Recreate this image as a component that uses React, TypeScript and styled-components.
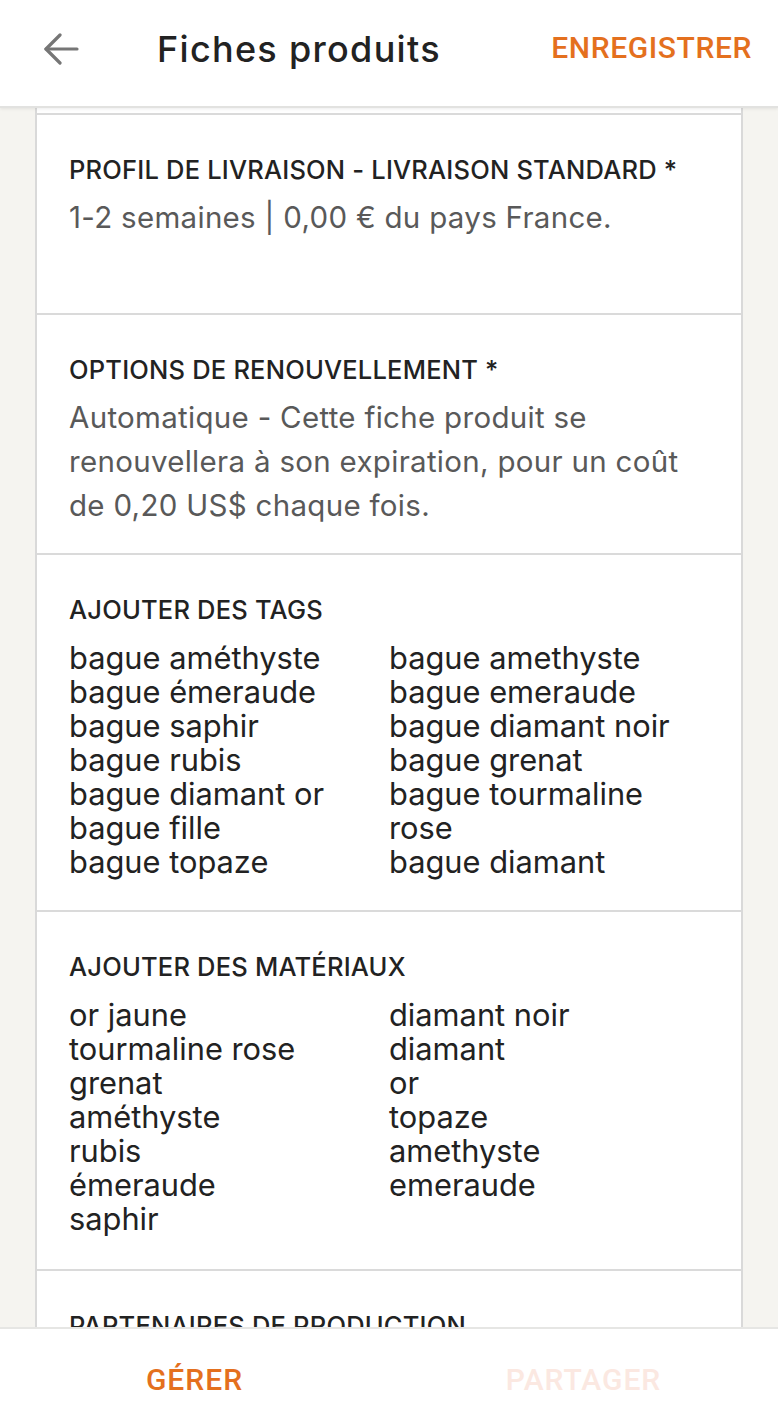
import React from "react";
import styled, { createGlobalStyle } from "styled-components";

const GlobalStyle = createGlobalStyle`
	html, body {
		margin: 0;
		padding: 0;
		background: #f5f4f0;
	}
	* {
		box-sizing: border-box;
	}
`;

const Screen = styled.div`
	width: 778px;
	height: 1411px;
	display: flex;
	flex-direction: column;
	background: #f5f4f0;
	overflow: hidden;
	font-family: Inter, "Noto Sans", sans-serif;
`;

const Header = styled.header`
	height: 108px;
	flex-shrink: 0;
	display: flex;
	align-items: center;
	padding: 0 26px 8px 42px;
	background: #fff;
	border-bottom: 2px solid #e2e2e0;
	box-shadow: 0 1px 3px rgba(0, 0, 0, 0.08);
	position: relative;
	z-index: 1;
`;

const BackButton = styled.button`
	width: 38px;
	height: 34px;
	padding: 0;
	border: 0;
	background: none;
	display: flex;
	align-items: center;
	justify-content: center;
	color: #767676;
`;

const Title = styled.h1`
	margin: 0 0 0 77px;
	flex: 1;
	font-weight: 500;
	font-size: 36px;
	letter-spacing: 1.3px;
	color: #222;
`;

const SaveButton = styled.button`
	border: 0;
	background: none;
	padding: 0 0 4px;
	font-family: Roboto, sans-serif;
	font-weight: 500;
	font-size: 30px;
	letter-spacing: 0.6px;
	color: #e4701e;
`;

const Scroll = styled.main`
	flex: 1;
	overflow: hidden;
`;

const Card = styled.div`
	margin: 0 35px;
	background: #fff;
	border-left: 2px solid #d9d9d9;
	border-right: 2px solid #d9d9d9;
`;

const Section = styled.section<{ $minHeight?: number; $bottom?: number }>`
	padding: 40px 32px ${(p) => p.$bottom ?? 28}px;
	min-height: ${(p) => (p.$minHeight ? `${p.$minHeight}px` : "auto")};
	border-bottom: 2px solid #dadada;
`;

const Sliver = styled.div`
	height: 7px;
	border-bottom: 2px solid #dadada;
`;

const Label = styled.h2`
	margin: 0;
	font-size: 25.5px;
	line-height: 30px;
	font-weight: 500;
	letter-spacing: 0.2px;
	color: #222;
`;

const Value = styled.p`
	margin: 10px 0 0;
	font-size: 29.5px;
	line-height: 44px;
	letter-spacing: 0.3px;
	color: #595959;
`;

const List = styled.div`
	margin-top: 16px;
	display: grid;
	grid-template-columns: 320px 1fr;
`;

const Column = styled.div`
	display: flex;
	flex-direction: column;
`;

const Item = styled.span`
	font-size: 30.8px;
	line-height: 34px;
	white-space: nowrap;
	color: #222;
`;

const BottomBar = styled.nav`
	height: 84px;
	flex-shrink: 0;
	display: grid;
	grid-template-columns: 1fr 1fr;
	align-items: start;
	padding-top: 34px;
	background: #fff;
	border-top: 2px solid #e6e6e4;
`;

const TabButton = styled.button<{ $disabled?: boolean }>`
	border: 0;
	background: none;
	padding: 0;
	font-family: Roboto, sans-serif;
	font-weight: 500;
	font-size: 30px;
	line-height: 34px;
	letter-spacing: 1px;
	color: ${(p) => (p.$disabled ? "#fbe8e1" : "#e4701e")};
`;

const tags = [
	["bague améthyste", "bague émeraude", "bague saphir", "bague rubis", "bague diamant or", "bague fille", "bague topaze"],
	["bague amethyste", "bague emeraude", "bague diamant noir", "bague grenat", "bague tourmaline", "rose", "bague diamant"],
];

const materials = [
	["or jaune", "tourmaline rose", "grenat", "améthyste", "rubis", "émeraude", "saphir"],
	["diamant noir", "diamant", "or", "topaze", "amethyste", "emeraude"],
];

function TwoColumns({ columns }: { columns: string[][] }) {
	return (
		<List>
			{columns.map((col, i) => (
				<Column key={i}>
					{col.map((t) => (
						<Item key={t}>{t}</Item>
					))}
				</Column>
			))}
		</List>
	);
}

export default function App() {
	return (
		<>
			<GlobalStyle />
			<Screen>
				<Header>
					<BackButton aria-label="Retour">
						<svg width="36" height="32" viewBox="0 0 36 32" fill="none" stroke="currentColor" strokeWidth="3.2" strokeLinecap="round" strokeLinejoin="round">
							<path d="M34 16H3" />
							<path d="M17 2L3 16l14 14" />
						</svg>
					</BackButton>
					<Title>Fiches produits</Title>
					<SaveButton>ENREGISTRER</SaveButton>
				</Header>
				<Scroll>
					<Card>
						<Sliver />
						<Section $minHeight={200}>
							<Label>PROFIL DE LIVRAISON - LIVRAISON STANDARD *</Label>
							<Value>1-2 semaines | 0,00 € du pays France.</Value>
						</Section>
						<Section $bottom={26}>
							<Label>OPTIONS DE RENOUVELLEMENT *</Label>
							<Value>
								Automatique - Cette fiche produit se renouvellera à son expiration, pour un coût de 0,20 US$ chaque
								fois.
							</Value>
						</Section>
						<Section $bottom={31}>
							<Label>AJOUTER DES TAGS</Label>
							<TwoColumns columns={tags} />
						</Section>
						<Section $bottom={33}>
							<Label>AJOUTER DES MATÉRIAUX</Label>
							<TwoColumns columns={materials} />
						</Section>
						<Section>
							<Label>PARTENAIRES DE PRODUCTION</Label>
						</Section>
					</Card>
				</Scroll>
				<BottomBar>
					<TabButton>GÉRER</TabButton>
					<TabButton $disabled>PARTAGER</TabButton>
				</BottomBar>
			</Screen>
		</>
	);
}
